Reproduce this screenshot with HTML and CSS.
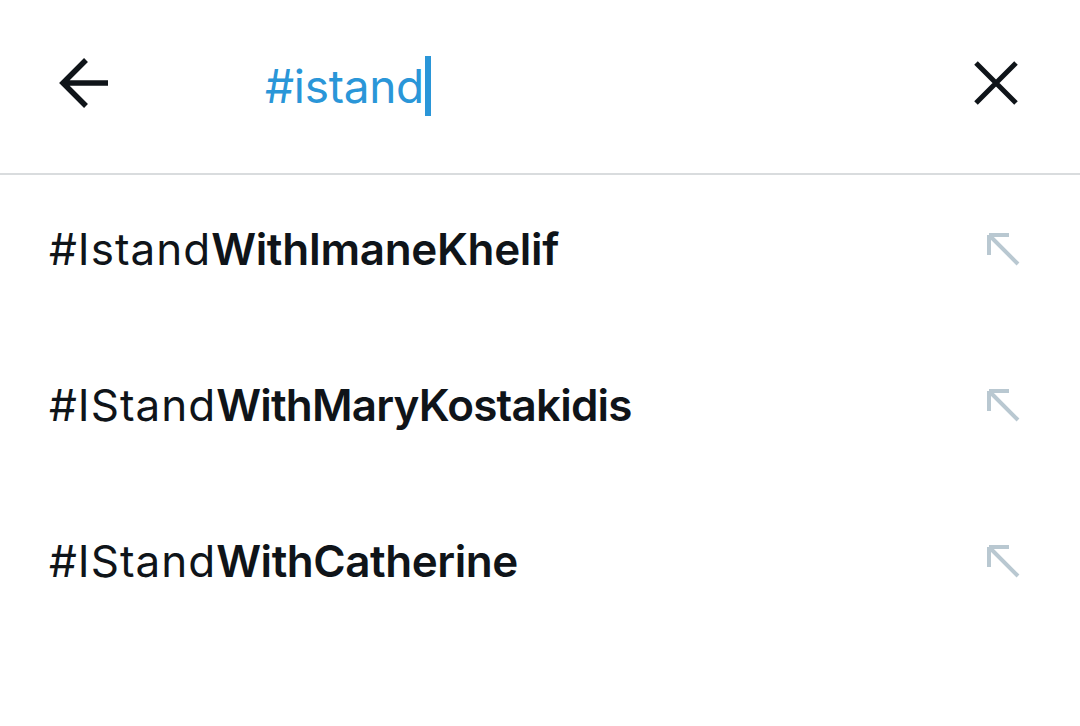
FILE: index.html
```html
<!DOCTYPE html>
<html>
<head>
<meta charset="utf-8">
<link rel="stylesheet" href="styles.css">
</head>
<body>
<header class="topbar">
  <button class="icon-btn back" aria-label="Back">
    <svg width="52" height="52" viewBox="0 0 52 52"><path d="M50 26H5M28 3L5 26l23 23" fill="none" stroke="#0f1419" stroke-width="5.5"/></svg>
  </button>
  <div class="query"><span class="q-text">#istand</span><span class="caret"></span></div>
  <button class="icon-btn close" aria-label="Clear">
    <svg width="48" height="48" viewBox="0 0 48 48"><path d="M4 4L44 44M44 4L4 44" fill="none" stroke="#0f1419" stroke-width="5"/></svg>
  </button>
</header>
<ul class="suggestions">
  <li class="item"><span class="tag"><span class="typed">#Istand</span><b>WithImaneKhelif</b></span>
    <svg class="fill-arrow" width="38" height="38" viewBox="0 0 38 38"><path d="M5 5L34 34M5 5H25M5 5V25" fill="none" stroke="#b9c8d1" stroke-width="4"/></svg></li>
  <li class="item"><span class="tag"><span class="typed">#IStand</span><b class="tight">WithMaryKostakidis</b></span>
    <svg class="fill-arrow" width="38" height="38" viewBox="0 0 38 38"><path d="M5 5L34 34M5 5H25M5 5V25" fill="none" stroke="#b9c8d1" stroke-width="4"/></svg></li>
  <li class="item"><span class="tag"><span class="typed">#IStand</span><b class="snug">WithCatherine</b></span>
    <svg class="fill-arrow" width="38" height="38" viewBox="0 0 38 38"><path d="M5 5L34 34M5 5H25M5 5V25" fill="none" stroke="#b9c8d1" stroke-width="4"/></svg></li>
</ul>
</body>
</html>
```
FILE: styles.css
```css
* { box-sizing: border-box; }
html, body { margin: 0; padding: 0; background: #fff; }
body { font-family: Inter, "Noto Sans", sans-serif; color: #0f1419; width: 1080px; height: 726px; overflow: hidden; }
.topbar {
  height: 175px;
  border-bottom: 2px solid #d9dcde;
  display: flex;
  align-items: center;
  padding: 0 60px 0 58px;
}
.icon-btn { background: none; border: 0; padding: 0; display: flex; margin-bottom: 7px; }
.back { margin-right: 155px; }
.query { flex: 1; display: flex; align-items: center; margin-bottom: 2px; }
.q-text { font-size: 46px; color: #2a96d8; letter-spacing: -0.3px; }
.caret { width: 6px; height: 60px; background: #2a96d8; margin-left: 1px; }
.suggestions { list-style: none; margin: 0; padding: 0; }
.item {
  height: 156px;
  display: flex;
  align-items: center;
  justify-content: space-between;
  padding: 0 58px 8px 49px;
}
.tag { font-size: 44px; font-weight: 400; }
.typed { letter-spacing: 1px; }
.tag b { font-weight: 600; letter-spacing: -0.35px; }
.tag b.tight { letter-spacing: -0.8px; }
.tag b.snug { letter-spacing: -0.45px; }
```
